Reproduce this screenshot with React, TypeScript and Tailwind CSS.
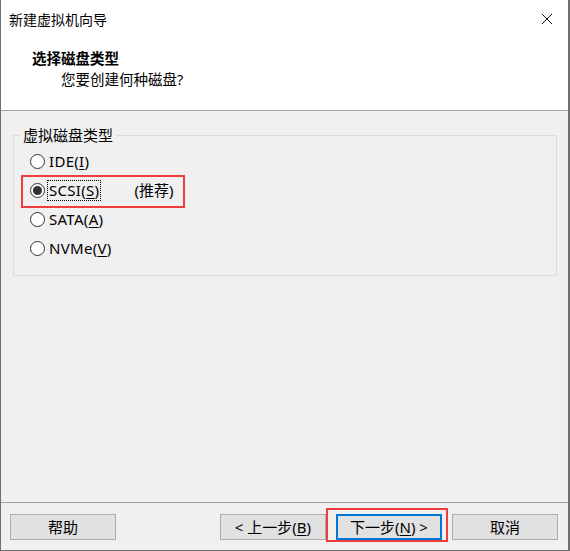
import React from 'react';

const font = { fontFamily: '"Noto Sans", "Noto Sans CJK SC", sans-serif' };

interface RadioRowProps {
  label: string;
  mnemonic: string;
  checked?: boolean;
  focused?: boolean;
  extra?: string;
  marked?: boolean;
}

const RadioRow: React.FC<RadioRowProps> = ({ label, mnemonic, checked, focused, extra, marked }) => (
  <div className="relative flex items-center h-[29px] pl-[15px]">
    {marked && (
      <div className="absolute left-[6px] top-[-1px] w-[164px] h-[33px] border-2 border-[#f03c3c]" />
    )}
    <span className="flex items-center justify-center w-[15px] h-[15px] rounded-full border border-[#333] bg-white">
      {checked && <span className="w-[9px] h-[9px] rounded-full bg-[#333]" />}
    </span>
    <span
      className={`ml-[3px] px-[1px] leading-[19px] text-[15px] tracking-[0.3px] text-black ${
        focused ? 'outline outline-1 outline-dotted outline-black' : 'outline-none'
      }`}
    >
      {label}(<span className="underline underline-offset-2">{mnemonic}</span>)
    </span>
    {extra && <span className="ml-[34px] text-[15px] text-black">{extra}</span>}
  </div>
);

interface ButtonProps {
  children: React.ReactNode;
  primary?: boolean;
}

const DialogButton: React.FC<ButtonProps> = ({ children, primary }) => (
  <button
    className={`w-[106px] h-[26px] flex items-center justify-center bg-[#e1e1e1] text-[15px] text-black ${
      primary ? 'border-2 border-[#0078d7]' : 'border border-[#adadad]'
    }`}
  >
    {children}
  </button>
);

export default function App() {
  return (
    <div
      style={font}
      className="w-[570px] h-[551px] flex flex-col bg-[#f0f0f0] border-l border-r-2 border-b border-[#6f6f6f] text-black"
    >
      {/* header */}
      <div className="h-[111px] bg-white border-b border-[#a0a0a0] flex flex-col">
        <div className="h-[38px] flex items-center justify-between pl-[8px] pr-[15px]">
          <span className="text-[14px]">新建虚拟机向导</span>
          <svg width="12" height="12" viewBox="0 0 12 12" className="mb-[1px]">
            <path d="M1 1 L11 11 M11 1 L1 11" stroke="#111" strokeWidth="1" fill="none" />
          </svg>
        </div>
        <div className="pl-[31px] pt-[10px] text-[14.5px] font-bold leading-[20px]">选择磁盘类型</div>
        <div className="pl-[60px] pt-[1px] text-[14.5px] leading-[20px]">您要创建何种磁盘?</div>
      </div>

      {/* body */}
      <div className="flex-1 pl-[12px] pr-[11px] pt-[14px]">
        <fieldset className="border border-[#dcdcdc] h-[151px] pl-[1px] pb-[10px]">
          <legend className="ml-[5px] px-[3px] text-[15px] leading-[20px]">虚拟磁盘类型</legend>
          <div className="pt-[2px] flex flex-col">
            <RadioRow label="IDE" mnemonic="I" />
            <RadioRow label="SCSI" mnemonic="S" checked focused extra="(推荐)" marked />
            <RadioRow label="SATA" mnemonic="A" />
            <RadioRow label="NVMe" mnemonic="V" />
          </div>
        </fieldset>
      </div>

      {/* footer */}
      <div className="h-[48px] border-t border-[#a0a0a0] flex items-start pt-[11px] pl-[9px] pr-[10px]">
        <DialogButton>帮助</DialogButton>
        <div className="flex-1" />
        <DialogButton>
          &lt; 上一步(<span className="underline underline-offset-2">B</span>)
        </DialogButton>
        <div className="relative ml-[10px]">
          <div className="absolute left-[-10px] top-[-6px] w-[122px] h-[34px] border-2 border-[#f03c3c]" />
          <DialogButton primary>
            下一步(<span className="underline underline-offset-2">N</span>) &gt;
          </DialogButton>
        </div>
        <div className="ml-[10px]">
          <DialogButton>取消</DialogButton>
        </div>
      </div>
    </div>
  );
}
